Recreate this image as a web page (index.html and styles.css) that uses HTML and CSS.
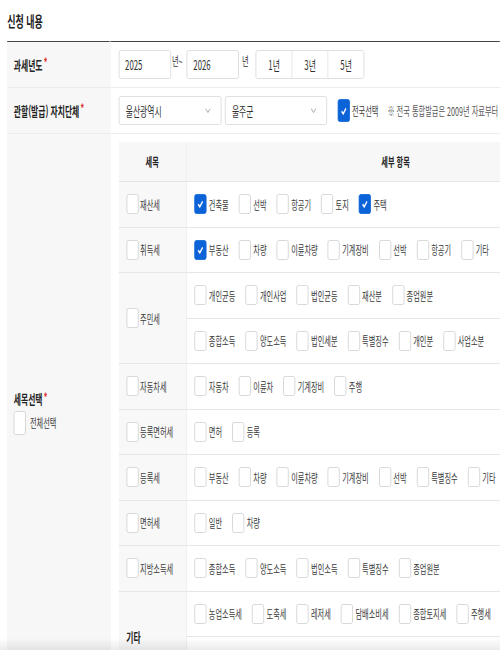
FILE: index.html
```html
<!DOCTYPE html>
<html lang="ko">
<head>
<meta charset="utf-8">
<title>신청 내용</title>
<link rel="stylesheet" href="styles.css">
</head>
<body>
<div class="page">
  <h2 class="title">신청 내용</h2>
  <table class="form">
    <colgroup><col class="c-label"><col></colgroup>
    <tbody>
      <tr>
        <th>과세년도<span class="req">*</span></th>
        <td>
          <div class="line">
            <div class="input">2025</div>
            <span class="unit">년~</span>
            <div class="input">2026</div>
            <span class="unit unit-end">년</span>
            <div class="btns"><span>1년</span><span>3년</span><span>5년</span></div>
          </div>
        </td>
      </tr>
      <tr>
        <th>관할(발급) 자치단체<span class="req">*</span></th>
        <td>
          <div class="line">
            <div class="select"><span>울산광역시</span><svg class="chev" width="9" height="5" viewBox="0 0 9 5"><path d="M0.5 0.5 L4.5 4.5 L8.5 0.5" fill="none" stroke="#9a9a9a" stroke-width="1"/></svg></div>
            <div class="select second"><span>울주군</span><svg class="chev" width="9" height="5" viewBox="0 0 9 5"><path d="M0.5 0.5 L4.5 4.5 L8.5 0.5" fill="none" stroke="#9a9a9a" stroke-width="1"/></svg></div>
            <span class="opt all"><span class="cb on big"><svg width="12" height="12" viewBox="0 0 12 12"><path d="M2.3 6.2 L5 8.8 L9.7 3.4" fill="none" stroke="#fff" stroke-width="2"/></svg></span>전국선택</span>
            <span class="note">※ 전국 통합발급은 2009년 자료부터 가능합니다.</span>
          </div>
        </td>
      </tr>
      <tr>
        <th>
          <div class="th-title">세목선택<span class="req">*</span></div>
          <label class="all-sel"><span class="cb tall"></span>전체선택</label>
        </th>
        <td class="tax-cell">
          <table class="tax">
            <colgroup><col class="c-name"><col class="c-items"></colgroup>
            <thead><tr><th>세목</th><th>세부 항목</th></tr></thead>
            <tbody>
              <tr>
                <td class="name"><span class="chk"><span class="cb"></span>재산세</span></td>
                <td class="items"><div class="opts">
                  <span class="opt"><span class="cb on"><svg width="12" height="12" viewBox="0 0 12 12"><path d="M2.3 6.2 L5 8.8 L9.7 3.4" fill="none" stroke="#fff" stroke-width="2"/></svg></span>건축물</span>
                  <span class="opt"><span class="cb"></span>선박</span>
                  <span class="opt"><span class="cb"></span>항공기</span>
                  <span class="opt"><span class="cb"></span>토지</span>
                  <span class="opt"><span class="cb on"><svg width="12" height="12" viewBox="0 0 12 12"><path d="M2.3 6.2 L5 8.8 L9.7 3.4" fill="none" stroke="#fff" stroke-width="2"/></svg></span>주택</span>
                </div></td>
              </tr>
              <tr>
                <td class="name"><span class="chk"><span class="cb"></span>취득세</span></td>
                <td class="items"><div class="opts">
                  <span class="opt"><span class="cb on"><svg width="12" height="12" viewBox="0 0 12 12"><path d="M2.3 6.2 L5 8.8 L9.7 3.4" fill="none" stroke="#fff" stroke-width="2"/></svg></span>부동산</span>
                  <span class="opt"><span class="cb"></span>차량</span>
                  <span class="opt"><span class="cb"></span>이륜차량</span>
                  <span class="opt"><span class="cb"></span>기계장비</span>
                  <span class="opt"><span class="cb"></span>선박</span>
                  <span class="opt"><span class="cb"></span>항공기</span>
                  <span class="opt"><span class="cb"></span>기타</span>
                </div></td>
              </tr>
              <tr>
                <td class="name" rowspan="2"><span class="chk"><span class="cb"></span>주민세</span></td>
                <td class="items"><div class="opts">
                  <span class="opt"><span class="cb"></span>개인균등</span>
                  <span class="opt"><span class="cb"></span>개인사업</span>
                  <span class="opt"><span class="cb"></span>법인균등</span>
                  <span class="opt"><span class="cb"></span>재산분</span>
                  <span class="opt"><span class="cb"></span>종업원분</span>
                </div></td>
              </tr>
              <tr>
                <td class="items"><div class="opts">
                  <span class="opt"><span class="cb"></span>종합소득</span>
                  <span class="opt"><span class="cb"></span>양도소득</span>
                  <span class="opt"><span class="cb"></span>법인세분</span>
                  <span class="opt"><span class="cb"></span>특별징수</span>
                  <span class="opt"><span class="cb"></span>개인분</span>
                  <span class="opt"><span class="cb"></span>사업소분</span>
                </div></td>
              </tr>
              <tr>
                <td class="name"><span class="chk"><span class="cb"></span>자동차세</span></td>
                <td class="items"><div class="opts">
                  <span class="opt"><span class="cb"></span>자동차</span>
                  <span class="opt"><span class="cb"></span>이륜차</span>
                  <span class="opt"><span class="cb"></span>기계장비</span>
                  <span class="opt"><span class="cb"></span>주행</span>
                </div></td>
              </tr>
              <tr>
                <td class="name"><span class="chk"><span class="cb"></span>등록면허세</span></td>
                <td class="items"><div class="opts">
                  <span class="opt"><span class="cb"></span>면허</span>
                  <span class="opt"><span class="cb"></span>등록</span>
                </div></td>
              </tr>
              <tr>
                <td class="name"><span class="chk"><span class="cb"></span>등록세</span></td>
                <td class="items"><div class="opts">
                  <span class="opt"><span class="cb"></span>부동산</span>
                  <span class="opt"><span class="cb"></span>차량</span>
                  <span class="opt"><span class="cb"></span>이륜차량</span>
                  <span class="opt"><span class="cb"></span>기계장비</span>
                  <span class="opt"><span class="cb"></span>선박</span>
                  <span class="opt"><span class="cb"></span>특별징수</span>
                  <span class="opt"><span class="cb"></span>기타</span>
                </div></td>
              </tr>
              <tr>
                <td class="name"><span class="chk"><span class="cb"></span>면허세</span></td>
                <td class="items"><div class="opts">
                  <span class="opt"><span class="cb"></span>일반</span>
                  <span class="opt"><span class="cb"></span>차량</span>
                </div></td>
              </tr>
              <tr>
                <td class="name"><span class="chk"><span class="cb"></span>지방소득세</span></td>
                <td class="items"><div class="opts">
                  <span class="opt"><span class="cb"></span>종합소득</span>
                  <span class="opt"><span class="cb"></span>양도소득</span>
                  <span class="opt"><span class="cb"></span>법인소득</span>
                  <span class="opt"><span class="cb"></span>특별징수</span>
                  <span class="opt"><span class="cb"></span>종업원분</span>
                </div></td>
              </tr>
              <tr>
                <td class="name etc" rowspan="2">기타</td>
                <td class="items"><div class="opts">
                  <span class="opt"><span class="cb"></span>농업소득세</span>
                  <span class="opt"><span class="cb"></span>도축세</span>
                  <span class="opt"><span class="cb"></span>레저세</span>
                  <span class="opt"><span class="cb"></span>담배소비세</span>
                  <span class="opt"><span class="cb"></span>종합토지세</span>
                  <span class="opt"><span class="cb"></span>주행세</span>
                </div></td>
              </tr>
              <tr>
                <td class="items"><div class="opts"></div></td>
              </tr>
            </tbody>
          </table>
        </td>
      </tr>
    </tbody>
  </table>
</div>
<div class="fade"></div>
</body>
</html>
```
FILE: styles.css
```css
html, body {
  margin: 0;
  padding: 0;
  background: #fff;
}
body {
  overflow: hidden;
  font-family: "Noto Sans CJK KR", "Noto Sans", sans-serif;
  color: #333;
}
.page {
  width: 833px;
  box-sizing: border-box;
  padding-left: 12px;
  transform: scaleX(0.6);
  transform-origin: 0 0;
}
.title {
  margin: 0;
  height: 41px;
  display: flex;
  align-items: center;
  font-size: 15px;
  font-weight: 700;
  color: #222;
}
.form {
  width: 821px;
  border-collapse: collapse;
  table-layout: fixed;
  border-top: 1px solid #444;
}
.c-label { width: 171px; }
.form > tbody > tr > th {
  background: #f7f7f7;
  text-align: left;
  vertical-align: middle;
  padding: 0 0 0 11px;
  font-size: 13px;
  font-weight: 700;
  color: #222;
  border-bottom: 1px solid #ececec;
  border-right: 1px solid #efefef;
}
.form > tbody > tr > td {
  padding: 8px 0 8px 14px;
  border-bottom: 1px solid #ececec;
  vertical-align: middle;
}
.req {
  color: #e0241b;
  font-size: 12px;
  margin-left: 2px;
  vertical-align: top;
  position: relative;
  top: -2px;
}
.line {
  display: flex;
  align-items: center;
  white-space: nowrap;
}
.line > * { flex: none; }
.input {
  width: 87px;
  height: 29px;
  box-sizing: border-box;
  border: 1px solid #d8d8d8;
  border-radius: 3px;
  padding: 0 10px;
  font-size: 13px;
  display: flex;
  align-items: center;
  color: #333;
}
.unit {
  font-size: 12px;
  align-self: flex-start;
  line-height: 18px;
  margin: 2px 7px 0 2px;
}
.unit-end {
  margin: 2px 12px 0 5px;
}
.btns {
  display: flex;
  height: 29px;
  box-sizing: border-box;
  border: 1px solid #d8d8d8;
  border-radius: 3px;
}
.btns span {
  width: 59px;
  display: flex;
  align-items: center;
  justify-content: center;
  font-size: 13px;
  color: #333;
  border-left: 1px solid #d8d8d8;
}
.btns span:first-child { border-left: 0; }
.select {
  width: 171px;
  height: 29px;
  box-sizing: border-box;
  border: 1px solid #d8d8d8;
  border-radius: 3px;
  padding: 0 17px 0 11px;
  margin-right: 6px;
  display: flex;
  align-items: center;
  justify-content: space-between;
  font-size: 13px;
  color: #333;
}
.select.second { margin-right: 18px; width: 170px; }
.chev { flex: none; }
.note {
  font-size: 12px;
  color: #555;
}
.cb {
  width: 20px;
  height: 20px;
  box-sizing: border-box;
  border: 1px solid #cfcfcf;
  border-radius: 3px;
  background: #fff;
  display: inline-flex;
  align-items: center;
  justify-content: center;
  flex: none;
}
.cb.on {
  background: #0c63d8;
  border-color: #0c63d8;
}
.cb.big { height: 23px; }
.cb.tall { height: 24px; }
.opt {
  display: inline-flex;
  flex: none;
  align-items: center;
  margin-right: 17px;
  font-size: 12px;
  color: #3a3a3a;
  white-space: nowrap;
}
.opt .cb { margin-right: 4px; }
.opt.all { margin-right: 15px; }
.th-title {
  line-height: 18px;
  margin-bottom: 3px;
}
.all-sel {
  display: flex;
  align-items: center;
  font-size: 12px;
  font-weight: 400;
  color: #3a3a3a;
}
.all-sel .cb { margin-right: 7px; }
.tax {
  width: 810px;
  border-collapse: collapse;
  table-layout: fixed;
}
.c-name { width: 113px; }
.tax thead th {
  height: 39px;
  padding: 0;
  background: #f7f7f7;
  font-size: 12px;
  font-weight: 700;
  color: #222;
  text-align: center;
  border-bottom: 1px solid #e6e6e6;
}
.tax thead th:first-child { border-right: 1px solid #e9e9e9; }
.tax tbody td {
  height: 44.5px;
  padding: 0 13px;
  border-bottom: 1px solid #e6e6e6;
  vertical-align: middle;
}
.tax tbody td.name {
  background: #f8f8f8;
  border-right: 1px solid #e9e9e9;
}
.chk {
  display: flex;
  align-items: center;
  font-size: 12px;
  color: #3a3a3a;
  white-space: nowrap;
}
.chk .cb { margin-right: 3px; }
.name.etc {
  font-size: 13px;
  font-weight: 700;
  color: #222;
}
.opts {
  display: flex;
  align-items: center;
}
.fade {
  position: fixed;
  left: 0;
  right: 0;
  bottom: 0;
  height: 12px;
  background: linear-gradient(rgba(0,0,0,0), rgba(0,0,0,0.08));
  pointer-events: none;
}
```
